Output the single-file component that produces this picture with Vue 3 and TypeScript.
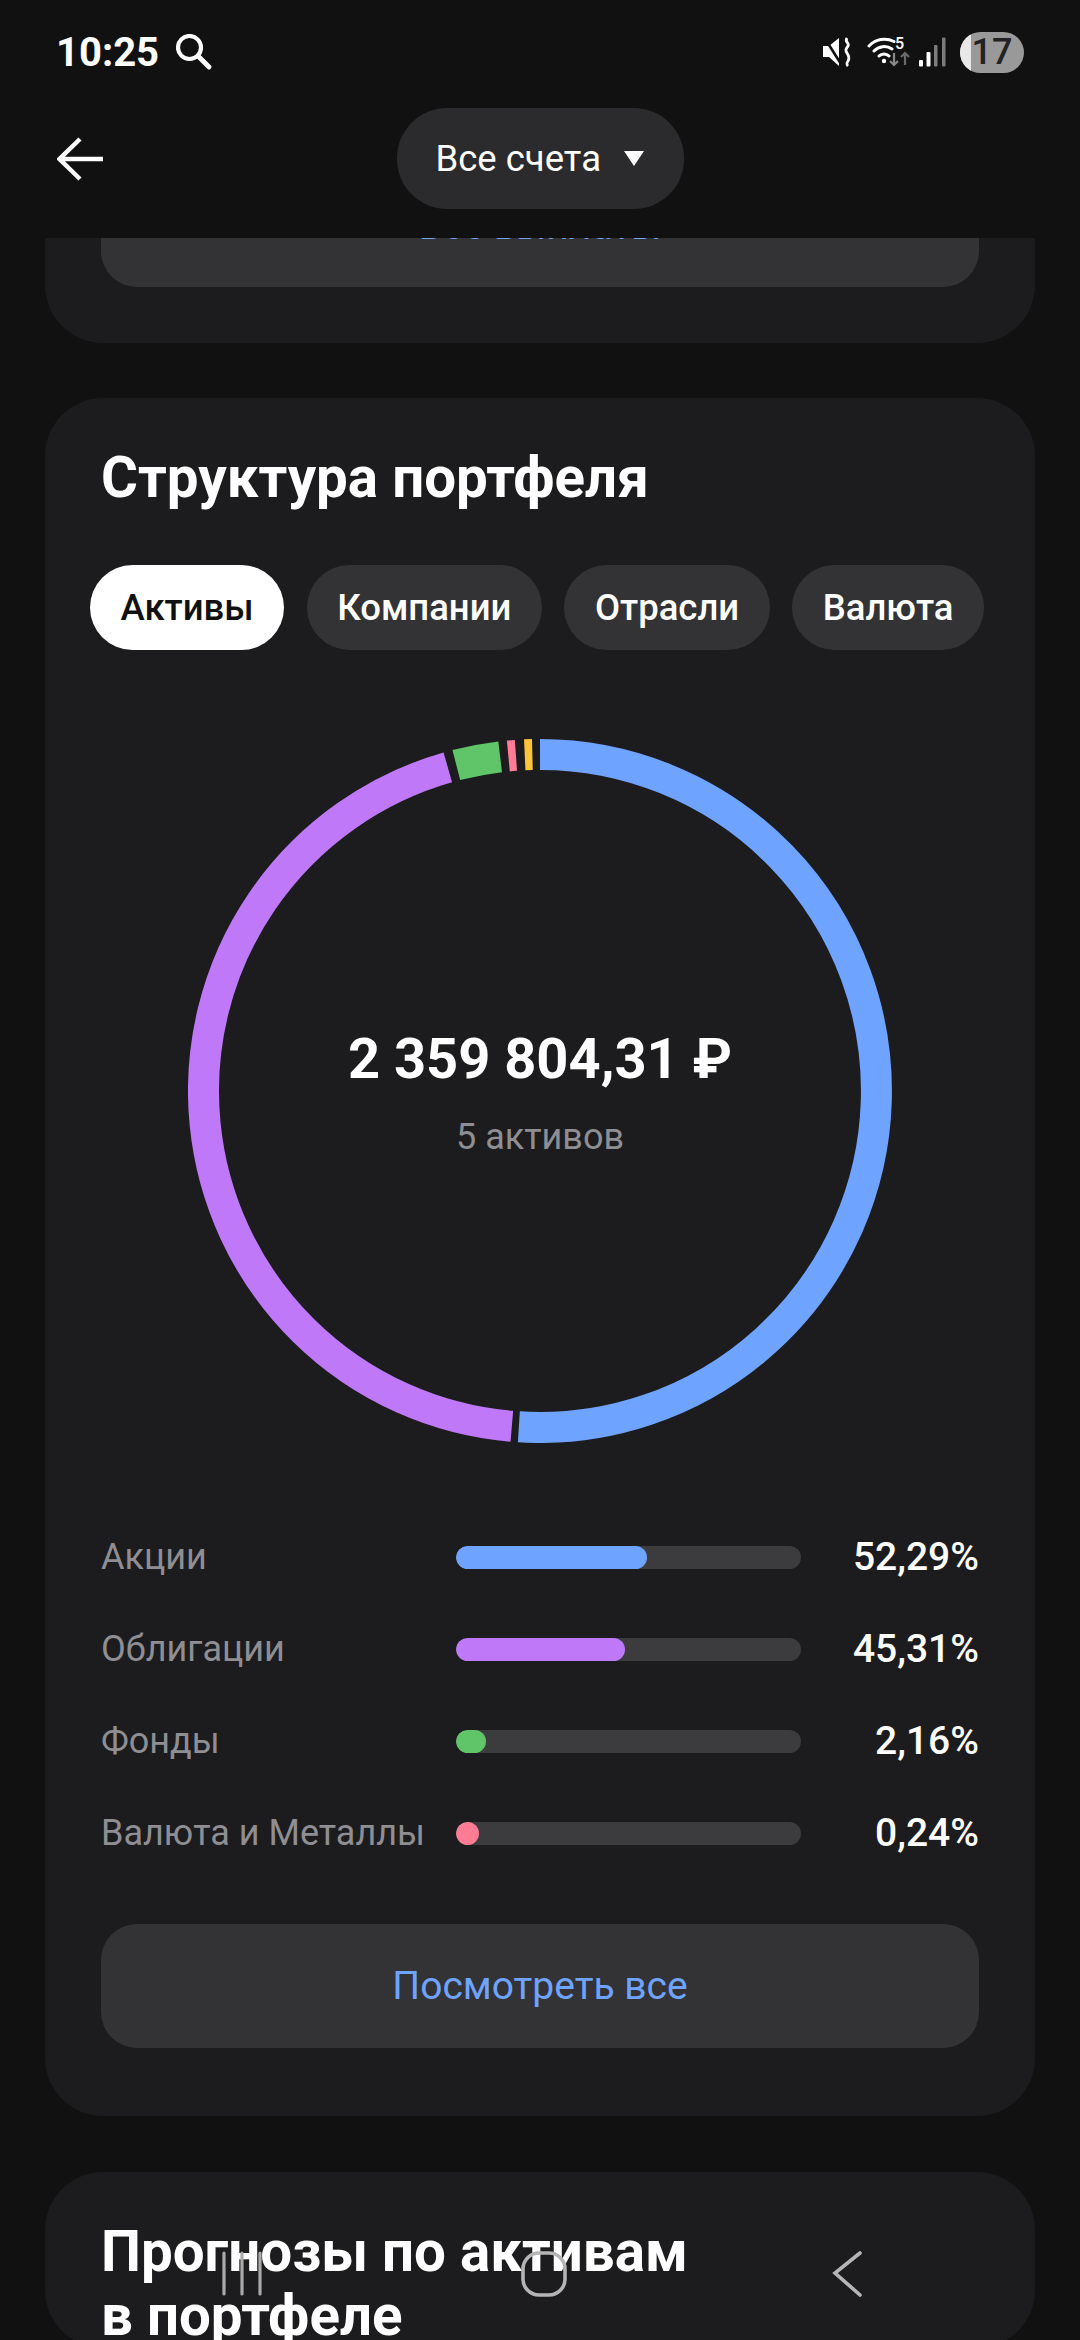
<script setup lang="ts">
interface Row {
  label: string
  value: string
  color: string
  fill: number
}

const tabs = ['Активы', 'Компании', 'Отрасли', 'Валюта']

const rows: Row[] = [
  { label: 'Акции', value: '52,29%', color: '#6ea3ff', fill: 191 },
  { label: 'Облигации', value: '45,31%', color: '#be78f8', fill: 169 },
  { label: 'Фонды', value: '2,16%', color: '#60c469', fill: 30 },
  { label: 'Валюта и Металлы', value: '0,24%', color: '#ff7c94', fill: 23 }
]

// start and end angle of each arc, clockwise from the top
const arcs = [
  { from: 0, to: 183.6, color: '#6ea3ff' },
  { from: 184.8, to: 344.1, color: '#be78f8' },
  { from: 345.6, to: 353.2, color: '#60c469' },
  { from: 354.6, to: 355.9, color: '#ff7c94' },
  { from: 357.4, to: 358.7, color: '#fcc43d' }
]

const point = (deg: number) => {
  const rad = (deg * Math.PI) / 180
  return `${(352 + 336.5 * Math.sin(rad)).toFixed(2)} ${(352 - 336.5 * Math.cos(rad)).toFixed(2)}`
}

const arcPath = (from: number, to: number) => {
  const large = to - from > 180 ? 1 : 0
  return `M${point(from)} A336.5 336.5 0 ${large} 1 ${point(to)}`
}
</script>

<template>
  <div class="screen">
    <div class="status">
      <div class="status-left">
        <span class="time">10:25</span>
        <svg class="search" viewBox="0 0 36 36" width="36" height="36">
          <circle cx="13.5" cy="13.5" r="11.5" fill="none" stroke="#fff" stroke-width="4.2" />
          <path d="M22.5 22.5 33 33" stroke="#fff" stroke-width="4.8" stroke-linecap="round" />
        </svg>
      </div>
      <div class="status-right">
        <svg class="mute" viewBox="0 0 30 30" width="30" height="30">
          <path d="M1 9h6l10-8v28L7 20H1z" fill="#fff" />
          <path d="M2 0l17 27" stroke="#111112" stroke-width="2.6" />
          <path d="M25 1c-3 4 3 5 1 8s-3 4-1 7 3 5 1 8-1 4 0 5" fill="none" stroke="#fff" stroke-width="2.8" />
        </svg>
        <svg class="wifi" viewBox="0 0 43 32" width="43" height="32">
          <path d="M2 10A21 21 0 0 1 27 5.5M7 15A14 14 0 0 1 25 13M12 20A7 7 0 0 1 22 20" fill="none" stroke="#fff" stroke-width="3" stroke-linecap="round" />
          <circle cx="17" cy="25" r="2.2" fill="#fff" />
          <path d="M27 17v12m-4-4 4 4 4-4" fill="none" stroke="#8a8a8a" stroke-width="2.2" />
          <path d="M38 29V17m-4 4 4-4 4 4" fill="none" stroke="#6a6a6a" stroke-width="2.2" />
          <text x="28" y="12.5" class="wifi-num">5</text>
        </svg>
        <svg class="signal" viewBox="0 0 27 30" width="27" height="30">
          <rect x="0" y="23" width="4" height="6.5" rx="1" fill="#fff" />
          <rect x="7.5" y="15" width="4" height="14.5" rx="1" fill="#fff" />
          <rect x="15" y="8" width="3.5" height="21.5" rx="1" fill="#7c7c7c" />
          <rect x="23" y="0.5" width="3.5" height="29" rx="1" fill="#7c7c7c" />
        </svg>
        <div class="battery">
          <span class="battery-level"></span>
          <span class="battery-num">17</span>
        </div>
      </div>
    </div>

    <header class="topbar">
      <svg class="back" viewBox="0 0 46 44" width="46" height="44">
        <path d="M23 2 2.5 22 23 42M3 22h43" fill="none" stroke="#fff" stroke-width="4.4" />
      </svg>
      <button class="account">
        <span>Все счета</span>
        <i class="caret"></i>
      </button>
    </header>

    <main class="content">
      <section class="card card-prev">
        <div class="more more-prev"><span>Все выплаты</span></div>
      </section>

      <section class="card card-structure">
        <h2 class="title">Структура портфеля</h2>
        <div class="tabs">
          <span v-for="(tab, i) in tabs" :key="tab" class="tab" :class="{ active: i === 0 }">{{ tab }}</span>
        </div>

        <div class="donut">
          <svg viewBox="0 0 704 704" width="704" height="704">
            <path
              v-for="arc in arcs"
              :key="arc.color"
              :d="arcPath(arc.from, arc.to)"
              :stroke="arc.color"
              stroke-width="31"
              fill="none"
            />
          </svg>
          <div class="total">
            <div class="sum">2 359 804,31 ₽</div>
            <div class="count">5 активов</div>
          </div>
        </div>

        <div class="rows">
          <div v-for="row in rows" :key="row.label" class="row">
            <span class="row-label">{{ row.label }}</span>
            <span class="track">
              <span class="bar" :style="{ width: row.fill + 'px', background: row.color }"></span>
            </span>
            <span class="row-value">{{ row.value }}</span>
          </div>
        </div>

        <div class="more">Посмотреть все</div>
      </section>

      <section class="card card-next">
        <h2 class="title">Прогнозы по активам<br />в портфеле</h2>
      </section>
    </main>

    <svg class="nav" viewBox="0 0 1080 60" width="1080" height="60">
      <path d="M224 3v41M242 3v41M260 3v41" stroke="#a9a9a9" stroke-width="3.2" stroke-linecap="round" />
      <rect x="523" y="3" width="42" height="42" rx="16" fill="none" stroke="#b5b5b5" stroke-width="3.6" />
      <path d="M860 3 835 23l25 22" fill="none" stroke="#b5b5b5" stroke-width="3.6" stroke-linecap="round" />
    </svg>
  </div>
</template>

<style scoped>
.screen {
  position: relative;
  display: flex;
  flex-direction: column;
  width: 1080px;
  height: 2340px;
  overflow: hidden;
  background: #111112;
  color: #fff;
  font-family: Roboto, "Noto Sans", sans-serif;
}

.status {
  display: flex;
  align-items: center;
  justify-content: space-between;
  flex: none;
  height: 104px;
  padding: 0 56px;
}

.status-left,
.status-right {
  display: flex;
  align-items: center;
}

.time {
  font-size: 40px;
  font-weight: 700;
}

.search {
  margin-left: 17px;
}

.status-right .mute {
  margin-right: 15px;
}

.status-right .wifi {
  margin-right: 9px;
}

.status-right .signal {
  margin-right: 14px;
}

.wifi-num {
  font-size: 16px;
  font-weight: 500;
  fill: #fff;
}

.battery {
  position: relative;
  width: 64px;
  height: 41px;
  border-radius: 21px;
  background: #999;
  overflow: hidden;
  text-align: center;
}

.battery-level {
  position: absolute;
  left: 0;
  top: 0;
  bottom: 0;
  width: 11px;
  background: #e8e8e8;
}

.battery-num {
  position: relative;
  color: #222;
  font-size: 36px;
  font-weight: 500;
  line-height: 41px;
}

.topbar {
  position: relative;
  display: flex;
  justify-content: center;
  flex: none;
  height: 134px;
}

.back {
  position: absolute;
  left: 57px;
  top: 33px;
}

.account {
  display: flex;
  align-items: center;
  gap: 23px;
  width: 287px;
  height: 101px;
  margin-top: 4px;
  padding: 0 0 0 39px;
  border: 0;
  border-radius: 50px;
  background: #2b2b2d;
  color: #fff;
  font-family: inherit;
  font-size: 36.5px;
}

.caret {
  width: 0;
  height: 0;
  border-top: 15px solid #fff;
  border-left: 10px solid transparent;
  border-right: 10px solid transparent;
}

.content {
  flex: 1;
  min-height: 0;
  overflow: hidden;
  display: flex;
  flex-direction: column;
  gap: 55px;
  padding: 0 45px;
}

.card {
  flex: none;
  box-sizing: border-box;
  border-radius: 58px;
  background: #1c1c1e;
  padding: 0 56px;
}

.card-prev {
  height: 105px;
  border-radius: 0 0 58px 58px;
}

.card-structure {
  height: 1718px;
  padding-top: 48px;
}

.card-next {
  margin-top: 1px;
  padding-top: 48px;
}

.title {
  margin: 0;
  font-size: 56.5px;
  font-weight: 700;
  line-height: 64px;
}

.tabs {
  display: flex;
  justify-content: space-between;
  margin: 55px -5px 0 -11px;
}

.tab {
  display: flex;
  align-items: center;
  height: 85px;
  padding: 0 30.5px;
  border-radius: 43px;
  background: #333336;
  font-size: 36.5px;
  font-weight: 500;
}

.tab.active {
  background: #fff;
  color: #111;
}

.donut {
  position: relative;
  width: 704px;
  height: 704px;
  margin: 89px auto 0;
}

.donut svg {
  display: block;
}

.total {
  position: absolute;
  inset: 0;
  display: flex;
  flex-direction: column;
  align-items: center;
  justify-content: center;
  padding-top: 4px;
}

.sum {
  font-size: 56px;
  font-weight: 700;
  line-height: 64px;
}

.count {
  margin-top: 24px;
  color: #8e8e93;
  font-size: 36px;
  line-height: 44px;
}

.rows {
  display: flex;
  flex-direction: column;
  gap: 44px;
  margin-top: 90px;
}

.row {
  display: flex;
  align-items: center;
  height: 48px;
  font-size: 36px;
}

.row-label {
  flex: none;
  width: 355px;
  color: #8e8e93;
  white-space: nowrap;
}

.track {
  flex: none;
  width: 345px;
  height: 23px;
  border-radius: 12px;
  background: #3c3c3e;
  overflow: hidden;
}

.bar {
  display: block;
  height: 100%;
  border-radius: 12px;
}

.row-value {
  flex: 1;
  text-align: right;
  font-size: 39px;
  font-weight: 500;
}

.more {
  display: flex;
  align-items: center;
  justify-content: center;
  height: 124px;
  margin-top: 67px;
  border-radius: 36px;
  background: #333336;
  color: #6ea3ff;
  font-size: 39px;
}

.more-prev {
  height: 49px;
  margin-top: 0;
  overflow: hidden;
  border-radius: 0 0 36px 36px;
  align-items: flex-end;
}

.more-prev span {
  transform: translateY(-38px);
}

.nav {
  position: absolute;
  left: 0;
  top: 2250px;
}
</style>
